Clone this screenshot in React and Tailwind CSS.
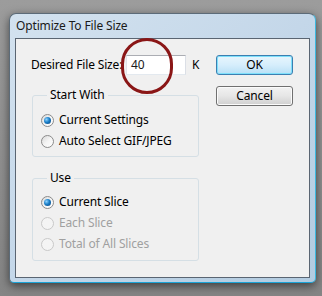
import React from 'react';

const Radio = ({ label, checked = false, disabled = false }) => (
  <div className="flex items-center h-4">
    <span
      className={`w-[13px] h-[13px] rounded-full border flex items-center justify-center ${
        disabled
          ? 'border-[#c9c9c9] bg-[#f4f4f4]'
          : 'border-[#8b8b8b] bg-gradient-to-br from-[#d9d9d9] via-[#f4f4f4] to-[#ffffff]'
      }`}
    >
      {checked && (
        <span className="w-[7px] h-[7px] rounded-full bg-[radial-gradient(circle_at_35%_35%,#8fd3ff_0%,#1a7fc8_45%,#0b3f78_100%)]" />
      )}
    </span>
    <span className={`ml-[5px] ${disabled ? 'text-[#a0a0a0]' : 'text-black'}`}>{label}</span>
  </div>
);

const Group = ({ title, className, children }) => (
  <fieldset className={`w-[167px] ml-px border border-[#d5dfe5] rounded-[3px] pl-2 ${className}`}>
    <legend className="ml-[6px] px-[3px] leading-4 text-black">{title}</legend>
    {children}
  </fieldset>
);

export default function App() {
  return (
    <div
      className="relative w-[322px] h-[296px] bg-gradient-to-b from-[#9c9c9c] to-[#858585] pt-[13px] pl-[9px] text-[12px] tracking-[-0.15px]"
      style={{ fontFamily: '"Noto Sans", "Liberation Sans", sans-serif' }}
    >
      {/* Window */}
      <div className="w-[307px] h-[270px] rounded-t-[7px] rounded-b-[5px] border border-[#5c6b78] border-b-[#1aa3d6] border-r-[#3bb8e0] bg-gradient-to-br from-[#d3e2ef] via-[#c4d7e9] to-[#b2cbe0] shadow-[0_3px_10px_rgba(0,0,0,0.55)] flex flex-col">
        <div className="h-[24px] pl-[6px] flex items-center text-[#1a1a1a]">Optimize To File Size</div>

        {/* Client area */}
        <div className="mx-[5px] h-[240px] border border-[#5a6572] bg-[#f0f0f0] flex pt-[16px] pl-[15px]">
          <div className="w-[185px]">
            <div className="flex items-center h-5">
              <span className="w-[95px] text-black whitespace-nowrap">Desired File Size:</span>
              <div className="w-[60px] h-5 border border-[#abadb3] border-b-[#e3e9ef] border-l-[#e2e3ea] border-r-[#dbdfe6] bg-white flex items-center pl-[4px] text-[#1a1a1a]">
                40
              </div>
              <span className="ml-[6px] text-black">K</span>
            </div>

            <Group title="Start With" className="mt-[12px] pt-[9px] pb-[7px]">
              <div className="flex flex-col gap-[5px]">
                <Radio label="Current Settings" checked />
                <Radio label="Auto Select GIF/JPEG" />
              </div>
            </Group>

            <Group title="Use" className="mt-[13px] pt-[8px] pb-[8px]">
              <div className="flex flex-col gap-[5px]">
                <Radio label="Current Slice" checked />
                <Radio label="Each Slice" disabled />
                <Radio label="Total of All Slices" disabled />
              </div>
            </Group>
          </div>

          <div className="w-[77px] flex flex-col">
            <button className="h-[20px] rounded-[3px] border border-[#3c7fb1] shadow-[inset_0_0_0_1px_#7ee0fb] bg-gradient-to-b from-[#e8f6fd] via-[#d6eefc] to-[#b8e0f6] text-black leading-none">
              OK
            </button>
            <button className="mt-[11px] h-[20px] rounded-[3px] border border-[#707070] shadow-[inset_0_0_0_1px_#fbfbfb] bg-gradient-to-b from-[#f2f2f2] via-[#e6e6e6] to-[#cfcfcf] text-black leading-none">
              Cancel
            </button>
          </div>
        </div>
      </div>

      {/* Annotation circle */}
      <div className="absolute left-[121px] top-[38px] w-[52px] h-[56px] rounded-full border-[3px] border-[#8a1616]" />
    </div>
  );
}
